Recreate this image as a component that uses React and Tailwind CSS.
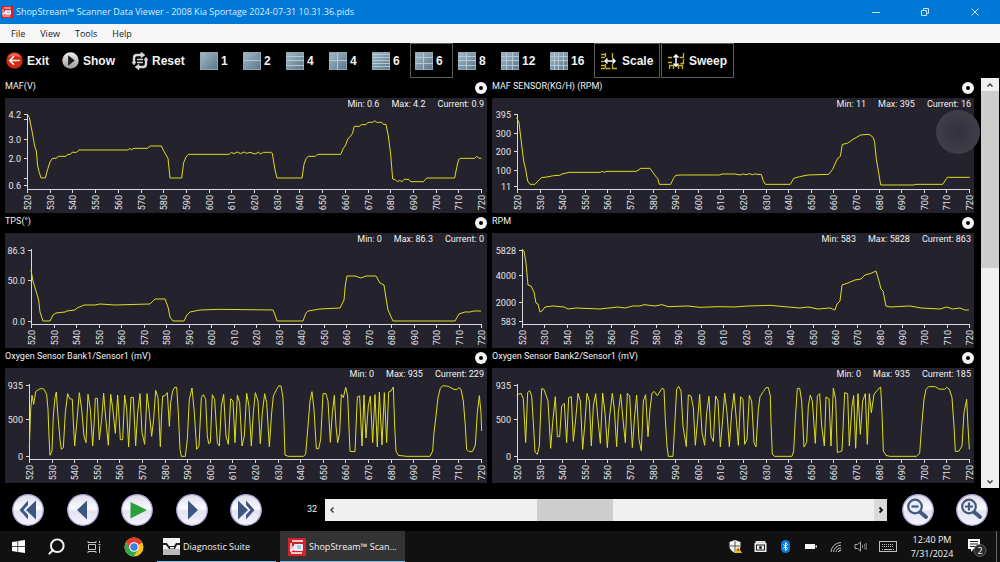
import { useState } from 'react'
import { Search } from 'lucide-react'

// Traces are recorded on a grid three times finer than the plot
const charts = [
  {
    title: 'MAF(V)',
    min: '0.6',
    max: '4.2',
    current: '0.9',
    left: 22,
    right: 476,
    yTicks: [[16, '4.2'], [21, ''], [41, '3.0'], [60, '2.0'], [80, ''], [87, '0.6']],
    origin: '-15 -66',
    points: '82,115 88,125 96,165 104,210 109,225 113,270 118,290 123,306 136,306 143,280 150,258 157,247 168,247 175,241 198,241 202,236 210,235 217,229 230,229 237,222 385,222 389,217 394,221 402,217 442,217 451,210 484,210 492,226 504,247 510,306 545,306 551,260 558,243 565,235 688,235 694,229 702,233 712,228 722,233 732,228 740,232 750,229 765,234 775,229 782,234 790,229 812,229 817,232 823,270 827,290 831,306 906,306 912,265 918,248 925,241 946,241 953,235 1022,235 1030,217 1037,207 1043,190 1050,182 1057,173 1063,151 1078,151 1084,146 1098,146 1104,139 1118,139 1124,134 1130,139 1145,139 1150,145 1158,145 1165,180 1172,235 1178,309 1186,311 1192,317 1199,313 1206,317 1213,310 1226,310 1232,317 1270,317 1280,306 1364,306 1370,275 1376,250 1381,247 1424,247 1430,241 1436,246 1444,247'
  },
  {
    title: 'MAF SENSOR(KG/H) (RPM)',
    min: '11',
    max: '395',
    current: '16',
    left: 25,
    right: 477,
    yTicks: [[16, '395'], [35, '300'], [53, '200'], [72, '100'], [88, '11']],
    origin: '-12 -66',
    points: '86,125 93,140 96,165 102,215 107,255 113,280 119,315 126,325 141,325 150,315 160,305 177,303 197,299 215,298 225,293 245,289 337,289 343,286 348,289 357,286 445,286 459,277 486,277 495,290 504,302 509,307 514,325 548,325 556,308 563,298 577,297 695,297 702,294 740,294 756,297 766,294 774,296 785,293 793,296 800,294 820,296 826,315 832,325 907,325 917,307 935,302 960,297 1022,295 1034,280 1045,255 1051,245 1057,241 1063,205 1078,202 1095,190 1118,177 1140,175 1148,178 1156,185 1160,200 1165,250 1172,290 1178,327 1276,327 1284,325 1364,325 1372,313 1378,304 1445,304'
  },
  {
    title: 'TPS(°)',
    min: '0',
    max: '86.3',
    current: '0',
    left: 26,
    right: 476,
    yTicks: [[17, '86.3'], [47, '50.0'], [88, '0.0']],
    origin: '-15 -66',
    points: '93,177 99,210 108,240 116,267 120,303 129,330 150,330 159,312 168,306 195,303 201,300 225,297 231,291 246,285 252,282 285,282 300,279 345,282 450,279 456,273 465,264 495,264 504,288 510,318 519,330 552,330 561,312 570,303 600,297 660,295 819,297 825,312 831,330 909,330 918,306 924,300 960,294 1020,291 1032,267 1036,222 1041,195 1065,195 1083,201 1098,195 1128,195 1140,216 1152,222 1158,261 1164,297 1179,330 1365,330 1377,309 1395,303 1410,303 1422,300 1443,300'
  },
  {
    title: 'RPM',
    min: '583',
    max: '5828',
    current: '863',
    left: 30,
    right: 477,
    yTicks: [[17, '5828'], [42, '4000'], [69, '2000'], [88, '583']],
    origin: '-12 -66',
    points: '102,117 108,120 114,156 120,222 129,225 138,243 144,276 150,279 156,303 162,300 171,288 195,285 228,288 240,294 264,291 336,294 390,288 411,291 435,285 456,285 468,281 501,285 522,281 540,287 600,285 636,289 690,287 740,288 780,285 846,283 900,288 936,291 960,288 990,294 1026,291 1041,297 1047,279 1056,270 1062,222 1080,216 1101,207 1119,204 1131,192 1149,187 1164,180 1173,210 1179,234 1185,240 1194,285 1206,288 1266,285 1299,291 1356,294 1376,288 1394,294 1416,291 1430,297 1443,297'
  },
  {
    title: 'Oxygen Sensor Bank1/Sensor1 (mV)',
    min: '0',
    max: '935',
    current: '229',
    left: 24,
    right: 476,
    yTicks: [[17, '935'], [51, '500'], [88, '0']],
    origin: '-15 -66',
    points: '88,305 92,190 96,148 101,175 107,137 115,131 125,127 132,130 140,145 144,190 147,270 150,328 156,315 160,210 165,155 169,138 173,200 180,280 184,310 190,305 196,200 203,143 209,158 217,160 220,230 224,300 230,235 238,140 245,190 252,270 258,290 264,145 271,190 278,300 283,220 286,157 292,157 298,282 305,220 311,142 317,215 325,298 332,145 338,185 346,262 353,147 357,210 361,281 368,281 374,147 380,190 386,303 393,154 400,154 407,299 413,200 420,143 426,260 434,295 441,143 447,190 455,271 461,220 467,133 474,155 481,302 485,200 488,150 494,150 502,140 508,241 512,170 518,135 524,124 530,124 535,200 540,310 544,331 556,331 562,280 568,160 576,126 583,200 590,310 597,300 604,155 610,146 617,160 622,270 626,293 631,290 637,146 644,160 652,290 658,300 664,180 671,145 678,270 685,295 692,158 699,165 705,290 712,147 719,170 726,300 733,270 740,142 747,180 754,300 760,200 766,140 774,165 781,293 787,200 794,143 800,170 808,302 815,200 820,150 830,130 837,119 843,120 849,155 852,230 855,327 865,331 910,331 917,325 924,240 930,165 936,137 942,190 949,308 956,308 962,280 969,143 978,143 984,165 991,289 997,200 1003,148 1008,240 1013,290 1019,260 1024,145 1030,155 1037,124 1043,150 1050,316 1065,317 1072,153 1079,150 1086,300 1092,147 1098,276 1105,180 1111,150 1118,290 1125,146 1132,303 1138,138 1146,297 1153,140 1160,290 1166,138 1173,135 1180,123 1184,240 1188,315 1195,328 1220,331 1290,331 1298,315 1302,260 1308,210 1314,155 1321,127 1328,119 1345,121 1362,130 1371,131 1376,125 1383,130 1390,165 1396,240 1400,310 1407,317 1418,316 1426,297 1432,200 1438,149 1443,200 1445,255'
  },
  {
    title: 'Oxygen Sensor Bank2/Sensor1 (mV)',
    min: '0',
    max: '935',
    current: '185',
    left: 25,
    right: 477,
    yTicks: [[17, '935'], [51, '500'], [88, '0']],
    origin: '-12 -66',
    points: '86,147 99,142 106,158 113,290 119,140 125,134 131,150 136,230 141,318 148,325 154,300 158,200 161,128 168,130 180,165 188,307 194,230 202,152 208,272 215,272 221,180 229,172 236,290 242,155 250,152 256,286 263,220 270,142 277,165 284,310 290,240 297,142 304,165 310,300 316,180 323,143 330,220 337,292 344,141 351,200 358,305 365,210 373,142 379,190 386,302 391,200 398,145 405,220 412,290 418,142 425,150 433,305 440,210 446,147 453,280 460,315 466,165 473,146 480,272 486,190 492,142 498,136 508,149 515,138 522,127 528,130 532,220 537,300 541,331 555,331 560,240 566,130 572,121 579,135 585,240 595,302 601,147 609,150 616,185 622,298 629,220 635,145 642,260 650,298 656,200 663,151 669,270 676,287 683,150 690,165 697,303 704,220 710,141 717,200 724,302 731,200 738,142 745,220 751,298 758,152 765,160 770,295 777,280 784,148 791,165 798,290 804,303 811,190 816,152 826,137 834,125 841,125 847,150 849,230 853,325 860,331 912,331 917,315 922,220 928,127 935,127 941,165 948,303 956,290 961,180 967,147 973,165 982,292 988,150 995,143 1001,240 1009,300 1014,153 1023,158 1029,300 1036,126 1043,160 1048,320 1054,317 1062,315 1070,140 1079,143 1084,300 1092,180 1097,149 1103,307 1110,143 1117,265 1124,165 1132,143 1138,295 1144,143 1150,200 1158,145 1170,130 1178,123 1182,200 1186,315 1194,328 1205,331 1285,331 1295,322 1301,240 1308,160 1314,130 1322,122 1342,122 1352,129 1370,130 1376,124 1384,130 1392,155 1398,240 1402,316 1412,316 1422,300 1428,200 1436,160 1440,240 1444,310'
  }
]

const layouts = [
  { id: '1', label: '1', cols: 1, rows: 1 },
  { id: '2', label: '2', cols: 1, rows: 2 },
  { id: '4r', label: '4', cols: 1, rows: 4 },
  { id: '4', label: '4', cols: 2, rows: 2 },
  { id: '6r', label: '6', cols: 1, rows: 6 },
  { id: '6', label: '6', cols: 2, rows: 3 },
  { id: '8', label: '8', cols: 2, rows: 4 },
  { id: '12', label: '12', cols: 3, rows: 4 },
  { id: '16', label: '16', cols: 4, rows: 4 }
]

const range = (n) => Array.from({ length: n }, (_, i) => i)

function AppIcon({ className }) {
  return (
    <svg viewBox="0 0 18 18" className={className}>
      <rect width="18" height="18" fill="#d3202c" />
      <path d="M4 3h11M3 5v9M3 15h11" stroke="#fff" strokeWidth="1.4" fill="none" />
      <rect x="6" y="6" width="9" height="7" rx="1" fill="#e8f1f8" />
      <path d="M2 12h3v-3h2" stroke="#fff" strokeWidth="1.5" fill="none" />
      <rect x="9" y="7" width="4" height="4" fill="#a9cbe6" />
    </svg>
  )
}

function Chart({ chart }) {
  const { left, right } = chart
  return (
    <section>
      <div className="flex h-5 items-start justify-between">
        <h2 className="text-[9px] leading-4 whitespace-nowrap">{chart.title}</h2>
        <button aria-label={`Options for ${chart.title}`} className="mt-1 flex size-3 items-center justify-center rounded-full bg-[#f4f4f4]">
          <span className="size-1 rounded-full bg-black" />
        </button>
      </div>
      <div className="bg-[#24222c]">
        <div className="flex h-3 justify-end gap-3 pr-[3px] text-[9px] leading-3">
          <span>Min: {chart.min}</span>
          <span>Max: {chart.max}</span>
          <span>Current: {chart.current}</span>
        </div>
        <svg viewBox="0 12 482 103" className="block h-auto w-full" role="img" aria-label={`${chart.title} graph`}>
          <g stroke="#d8d8de" strokeWidth="1" fill="none" shapeRendering="crispEdges">
            <path d={`M${left + 0.5} 16V91.5H${right + 1}`} />
            {chart.yTicks.map(([y]) => (
              <path key={y} d={`M${left - 3} ${y + 0.5}h3`} />
            ))}
            {range(21).map((i) => (
              <path key={i} d={`M${Math.round(left + ((right - left) * i) / 20) + 0.5} 91v4`} />
            ))}
          </g>
          <g fill="#e4e4e8" fontSize="9">
            {chart.yTicks.map(([y, label]) => (
              <text key={y} x={left - 6} y={y + 4} textAnchor="end">{label}</text>
            ))}
            {range(21).map((i) => (
              <text
                key={i}
                transform={`translate(${Math.round(left + ((right - left) * i) / 20) + 4} 97) rotate(-90)`}
                textAnchor="end"
              >
                {520 + i * 10}
              </text>
            ))}
          </g>
          <g transform="scale(0.33333)">
            <polyline
              transform={`translate(${chart.origin.replace(' ', ',')})`}
              points={chart.points}
              fill="none"
              stroke="#dede1c"
              strokeWidth="3"
              strokeLinejoin="round"
            />
          </g>
        </svg>
      </div>
    </section>
  )
}

function LayoutIcon({ cols, rows }) {
  return (
    <svg viewBox="0 0 18 18" className="size-[18px] shrink-0">
      <defs>
        <linearGradient id="pane" x1="0" y1="0" x2="1" y2="1">
          <stop offset="0" stopColor="#a3bac8" />
          <stop offset="1" stopColor="#5c7688" />
        </linearGradient>
      </defs>
      <rect x="0.5" y="0.5" width="17" height="17" fill="url(#pane)" stroke="#8fa6b4" />
      <g stroke="#b4c8d3" strokeWidth="1">
        {range(cols - 1).map((i) => (
          <path key={i} d={`M${Math.round((18 * (i + 1)) / cols) - 0.5} 0v18`} />
        ))}
        {range(rows - 1).map((i) => (
          <path key={i} d={`M0 ${Math.round((18 * (i + 1)) / rows) - 0.5}h18`} />
        ))}
      </g>
    </svg>
  )
}

function RoundButton({ label, children }) {
  return (
    <button aria-label={label} className="size-8 shrink-0">
      <svg viewBox="0 0 32 32" className="size-8">
        <defs>
          <linearGradient id="knob" x1="0" y1="0" x2="0" y2="1">
            <stop offset="0" stopColor="#dcdcea" />
            <stop offset="0.45" stopColor="#fafaff" />
            <stop offset="0.55" stopColor="#e4e3f2" />
            <stop offset="1" stopColor="#f4f3ff" />
          </linearGradient>
        </defs>
        <circle cx="16" cy="16" r="15.3" fill="url(#knob)" stroke="#a9a2d4" strokeWidth="1.2" />
        {children}
      </svg>
    </button>
  )
}

function TitleBar() {
  return (
    <header className="flex h-6 items-center bg-[#0078d7] pl-px">
      <AppIcon className="size-3" />
      <h1 className="ml-[3px] font-['Open_Sans',sans-serif] text-[9px] leading-4 whitespace-nowrap text-[#dcecfa]">
        ShopStream™ Scanner Data Viewer - 2008 Kia Sportage 2024-07-31 10.31.36.pids
      </h1>
      <div className="ml-auto flex h-full">
        <button aria-label="Minimize" className="flex w-[49px] items-center justify-center">
          <svg viewBox="0 0 8 8" className="size-2" stroke="#cfe4f7"><path d="M0 4.5h8" /></svg>
        </button>
        <button aria-label="Restore" className="flex w-[49px] items-center justify-center">
          <svg viewBox="0 0 8 8" className="size-2" stroke="#cfe4f7" fill="none"><path d="M.5 2.5h5v5h-5zM2.5 2.5V.5h5v5h-2" /></svg>
        </button>
        <button aria-label="Close" className="flex w-[51px] items-center justify-center">
          <svg viewBox="0 0 8 8" className="size-2" stroke="#cfe4f7"><path d="M.5.5l7 7M7.5.5l-7 7" /></svg>
        </button>
      </div>
    </header>
  )
}

function Toolbar() {
  const [layout, setLayout] = useState('6')

  return (
    <div className="flex h-[35px] bg-black font-['Liberation_Sans',sans-serif] text-[12px] font-bold">
      <button className="flex w-14 items-center gap-1 pl-1.5">
        <svg viewBox="0 0 18 18" className="size-[17px] shrink-0">
          <circle cx="9" cy="9" r="8.7" fill="#cf2a12" />
          <path d="M2 6a7.5 7.5 0 0 1 14 0C12 4 6 4 2 6z" fill="#e8694c" />
          <path d="M14.5 9H4M8.5 4.5L4 9l4.5 4.5" fill="none" stroke="#fff" strokeWidth="1.8" />
        </svg>
        Exit
      </button>
      <button className="flex w-[69px] items-center gap-1 pl-1.5">
        <svg viewBox="0 0 18 18" className="size-[17px] shrink-0">
          <defs>
            <linearGradient id="show" x1="0" y1="0" x2="0" y2="1">
              <stop offset="0" stopColor="#efefef" />
              <stop offset="1" stopColor="#9c9c9c" />
            </linearGradient>
          </defs>
          <circle cx="9" cy="9" r="8.7" fill="url(#show)" />
          <path d="M6.5 3.5L13.5 9l-7 5.5z" fill="#1c1c1c" />
        </svg>
        Show
      </button>
      <button className="flex w-[70px] items-center gap-[3px] pl-1.5">
        <svg viewBox="0 0 18 18" className="size-[18px] shrink-0" fill="none" stroke="#d8d8d8">
          <path d="M3 11V6C3 4 4 3 6 3h5" strokeWidth="2.4" />
          <path d="M15 7v5c0 2-1 3-3 3H7" strokeWidth="2.4" />
          <path d="M10 0l4 3-4 3zM8 12l-4 3 4 3zM1 10h4l-2 3zM13 8h4l-2-3z" fill="#d8d8d8" strokeWidth=".5" />
          <path d="M6 7.5h6M6 10.5h6" strokeWidth="1.5" />
        </svg>
        Reset
      </button>
      {layouts.map(({ id, label, cols, rows }) => (
        <button
          key={id}
          aria-pressed={layout === id}
          onClick={() => setLayout(id)}
          className={`flex items-center gap-[3px] border pl-1 ${label.length > 1 ? 'w-[49px]' : 'w-[43px]'} ${
            layout === id ? 'border-[#5a5a5a]' : 'border-transparent'
          }`}
        >
          <LayoutIcon cols={cols} rows={rows} />
          {label}
        </button>
      ))}
      <button className="flex w-[66px] items-center gap-1 border border-[#5a5a5a] pl-[5px]">
        <svg viewBox="0 0 18 18" className="size-[18px] shrink-0" fill="none">
          <path d="M1 2.5h4M1 5.5h4M1 9.5h3M1 13.5h4M1 16.5h4M5.5 1v4M12.5 1v5M5.5 16.5h5M12 16.5h5M5.5 12v4M12.5 12v4" stroke="#c8b31e" strokeWidth="1.3" />
          <path d="M5 9h10M7.5 6.5L5 9l2.5 2.5M12.5 6.5L15 9l-2.5 2.5" stroke="#fff" strokeWidth="1.5" />
        </svg>
        Scale
      </button>
      <button className="ml-px flex w-[73px] items-center gap-1 border border-[#5a5a5a] pl-[5px]">
        <svg viewBox="0 0 18 18" className="size-[18px] shrink-0" fill="none">
          <path d="M1 5.5h4M16.5 1v4.5h-4M1 10.5h4M16.5 7v4.5h-3M2.5 17v-3.5h13V17M6.5 14v3M11.5 14v3" stroke="#c8b31e" strokeWidth="1.3" />
          <path d="M9 3v11M6.5 5.5L9 3l2.5 2.5M6.5 11.5L9 14l2.5-2.5" stroke="#fff" strokeWidth="1.5" />
        </svg>
        Sweep
      </button>
    </div>
  )
}

function Transport() {
  return (
    <div className="flex h-[43px] items-center bg-black px-3">
      <div className="flex w-[250px] shrink-0 justify-between">
        <RoundButton label="First frame">
          <path d="M24 6.5v19L14 16z" fill="#3d5580" />
          <path d="M16 6.5L7.5 16 16 25.5V21l-4.5-5 4.5-5z" fill="#3d5580" />
        </RoundButton>
        <RoundButton label="Previous frame">
          <path d="M20 6.5v19L10 16z" fill="#3d5580" />
        </RoundButton>
        <RoundButton label="Play">
          <path d="M9.5 8v16.5L26 16z" fill="#2ba03c" />
        </RoundButton>
        <RoundButton label="Next frame">
          <path d="M12 6.5v19L22 16z" fill="#3d5580" />
        </RoundButton>
        <RoundButton label="Last frame">
          <path d="M8 6.5v19L18 16z" fill="#3d5580" />
          <path d="M16 6.5l8.5 9.5-8.5 9.500V21l4.500-5-4.500-5z" fill="#3d5580" />
        </RoundButton>
      </div>
      <span className="ml-[45px] w-[18px] text-[9px]">32</span>
      <div className="flex h-[22px] grow items-stretch bg-[#f0f0f0]">
        <button aria-label="Scroll left" className="flex w-[13px] items-center justify-center">
          <svg viewBox="0 0 6 8" className="h-2 w-1.5" fill="none" stroke="#444" strokeWidth="1.5"><path d="M4.5 1.5L2 4l2.5 2.5" /></svg>
        </button>
        <div className="grow-[199]" />
        <div className="grow-[76] bg-[#cdcdcd]" />
        <div className="grow-[261]" />
        <button aria-label="Scroll right" className="flex w-[13px] items-center justify-center bg-[#dadada]">
          <svg viewBox="0 0 6 8" className="h-2 w-1.5" fill="none" stroke="#111" strokeWidth="1.8"><path d="M1.5 1.5L4 4 1.5 6.5" /></svg>
        </button>
      </div>
      <div className="ml-[15px] flex gap-[22px]">
        <RoundButton label="Zoom out">
          <path d="M17.5 17.5l6.500 5.500" stroke="#46597c" strokeWidth="4" strokeLinecap="round" />
          <circle cx="13" cy="12.5" r="6.8" fill="#e9edf6" stroke="#46597c" strokeWidth="2.2" />
          <path d="M9.5 12.5h7" stroke="#46597c" strokeWidth="2.2" />
        </RoundButton>
        <RoundButton label="Zoom in">
          <path d="M17.5 17.5l6.500 5.500" stroke="#46597c" strokeWidth="4" strokeLinecap="round" />
          <circle cx="13" cy="12.5" r="6.8" fill="#e9edf6" stroke="#46597c" strokeWidth="2.2" />
          <path d="M9 12.5h8M13 8.5v8" stroke="#46597c" strokeWidth="2.2" />
        </RoundButton>
      </div>
    </div>
  )
}

function Taskbar() {
  return (
    <footer className="flex h-[31px] items-stretch bg-[#111112] font-['Open_Sans',sans-serif] text-[9px]">
      <button aria-label="Start" className="flex w-[37px] items-center justify-center">
        <svg viewBox="0 0 13 13" className="size-[13px]" fill="#fff">
          <path d="M0 2l5.5-.8v5H0zM6.2 1L13 0v6.2H6.2zM0 6.9h5.5v5L0 11.1zM6.2 6.9H13V13l-6.8-1z" />
        </svg>
      </button>
      <button aria-label="Search" className="flex w-[38px] items-center justify-center">
        <Search className="size-[19px] -scale-x-100" strokeWidth={2.5} />
      </button>
      <button aria-label="Task view" className="flex w-[37px] items-center justify-center">
        <svg viewBox="0 0 14 14" className="size-[14px]" fill="none" stroke="#c8c8c8">
          <path d="M1 1v1.5h8V1M1.5 4.5h7v5h-7zM1 13v-1.5h8V13M12.5 1v2M12.5 6v7M11.5 4.5h2" />
        </svg>
      </button>
      <button aria-label="Chrome" className="flex w-[43px] items-center justify-center">
        <svg viewBox="0 0 20 20" className="size-5">
          <circle cx="10" cy="10" r="9.5" fill="#fbc116" />
          <path d="M10 10L1.8 5.2A9.5 9.5 0 0 1 18.2 5.2z" fill="#e33b2e" />
          <path d="M10 5.2h8.2L10 10zM1.8 5.2L5.8 12.4 10 10z" fill="#e33b2e" />
          <path d="M1.8 5.2A9.5 9.5 0 0 0 9.5 19.5L14.2 12.4 10 10 5.9 12.4z" fill="#2da94f" />
          <circle cx="10" cy="10" r="4.8" fill="#fff" />
          <circle cx="10" cy="10" r="3.7" fill="#3b7ded" />
        </svg>
      </button>
      <button className="ml-0.5 flex w-[119px] items-center gap-[3px] border-b border-[#76b9ed] pt-px pl-1.5">
        <svg viewBox="0 0 17 17" className="size-[17px] shrink-0">
          <rect width="17" height="17" fill="#f1f1f1" />
          <rect y="11" width="17" height="6" fill="#b9b9b9" />
          <path d="M0 5h4l2 3h5l2-3h4v2h-3l-2 4H6L3 7H0z" fill="#222" />
          <path d="M7 9h4v1.5H7z" fill="#fff" />
        </svg>
        Diagnostic Suite
      </button>
      <button className="ml-1 flex w-[125px] items-center gap-[3px] border-b border-[#76b9ed] bg-[#333334] pt-px pl-2">
        <AppIcon className="size-[18px] shrink-0" />
        ShopStream™ Scan...
      </button>
      <div className="ml-auto flex items-center">
        <button aria-label="Security" className="flex w-[25px] justify-center">
          <svg viewBox="0 0 13 13" className="size-[13px]">
            <path d="M6 0l5.5 2v4.5C11.5 9.5 9 11.5 6 13 3 11.5.5 9.5.5 6.5V2z" fill="#f2f2f2" />
            <path d="M6 1v11M1 6h10" stroke="#333" strokeWidth=".8" />
            <path d="M9 6.5l4 6.5H5z" fill="#f5b51b" />
            <path d="M9 9v2" stroke="#222" />
          </svg>
        </button>
        <button aria-label="Device" className="flex w-[25px] justify-center">
          <svg viewBox="0 0 13 13" className="size-[13px]">
            <rect x="1.5" y="1" width="10" height="2" fill="#ddd" />
            <rect x=".5" y="3" width="12" height="9" fill="#ececec" />
            <rect x="2.5" y="5" width="8" height="5" fill="none" stroke="#222" />
            <circle cx="6.5" cy="7.5" r="1.5" fill="#222" />
          </svg>
        </button>
        <button aria-label="Bluetooth" className="flex w-[25px] justify-center">
          <svg viewBox="0 0 13 13" className="size-[13px]">
            <rect x="2" y="0" width="9" height="13" rx="4.5" fill="#0a7be0" />
            <path d="M4.2 4.5l4.4 4L6.5 10.5v-8L8.6 4.5l-4.4 4" fill="none" stroke="#fff" strokeWidth=".9" />
          </svg>
        </button>
        <button aria-label="Battery" className="flex w-[25px] justify-center">
          <svg viewBox="0 0 13 13" className="size-[13px]"><path d="M1 4h10v5H1zM11.5 5.5H13v2h-1.5z" fill="#f4f4f4" /></svg>
        </button>
        <button aria-label="Network" className="flex w-[25px] justify-center">
          <svg viewBox="0 0 13 13" className="size-[13px]" fill="none" stroke="#b8b8b8">
            <path d="M2 12A10 10 0 0 1 12 2.5M4.5 12A7.5 7.5 0 0 1 12 5.2M7 12A5 5 0 0 1 12 8" />
            <path d="M9.5 12a2.5 2.5 0 0 1 2.5-2" stroke="#fff" />
          </svg>
        </button>
        <button aria-label="Volume" className="flex w-[25px] justify-center">
          <svg viewBox="0 0 13 13" className="size-[13px]" fill="none" stroke="#a8a8a8">
            <path d="M1 4.5h2.5L6.5 2v9L3.5 8.5H1z" />
            <path d="M8.5 5v3M10.2 4a4 4 0 0 1 0 5M11.8 3a6 6 0 0 1 0 7" strokeWidth=".8" />
          </svg>
        </button>
        <button aria-label="Keyboard" className="flex w-[30px] justify-center">
          <svg viewBox="0 0 18 12" className="h-3 w-[18px]" fill="none" stroke="#bdbdbd">
            <rect x=".5" y=".5" width="17" height="10" />
            <path d="M3 3.5h12M3 5.5h12" strokeDasharray="1 1" />
            <path d="M3 8.5h1M5 8.5h8M14 8.5h1" />
          </svg>
        </button>
        <button className="w-[58px] text-center leading-[14px]">
          12:40 PM<br />7/31/2024
        </button>
        <button aria-label="2 notifications" className="mr-[9px] ml-1.5 flex w-5 justify-center">
          <svg viewBox="0 0 20 20" className="size-5">
            <path d="M1 2h12v10H6.5L4 15v-3H1z" fill="#fff" />
            <path d="M3 4.5h8M3 7h8M3 9.5h6" stroke="#222" />
            <circle cx="13" cy="13.5" r="6" fill="#2a2a2a" stroke="#777" strokeWidth=".8" />
            <text x="13" y="17" fontSize="9" fill="#fff" textAnchor="middle">2</text>
          </svg>
        </button>
        <div className="mr-[3px] h-[31px] w-px bg-[#666]" />
      </div>
    </footer>
  )
}

function App() {
  return (
    <div className="flex min-h-screen flex-col bg-black font-['Roboto','Liberation_Sans',sans-serif] text-[#f2f2f2]">
      <TitleBar />
      <nav className="flex h-[19px] items-center gap-[15px] bg-[#f6f6f6] pl-[11px] font-['Open_Sans',sans-serif] text-[9px] text-[#1a1a1a]">
        <button>File</button>
        <button>View</button>
        <button>Tools</button>
        <button>Help</button>
      </nav>
      <Toolbar />
      <main className="relative flex grow pr-px pl-[5px]">
        <div className="grid grow grid-cols-2 gap-x-[5px] self-start pb-[5px]">
          {charts.map((chart) => (
            <Chart key={chart.title} chart={chart} />
          ))}
        </div>
        <div className="ml-[7px] flex w-[18px] flex-col bg-[#f0f0f0]">
          <button aria-label="Scroll up" className="flex h-[13px] items-center justify-center">
            <svg viewBox="0 0 8 6" className="h-1.5 w-2" fill="none" stroke="#444" strokeWidth="1.5"><path d="M1.5 4.5L4 2l2.5 2.5" /></svg>
          </button>
          <div className="grow-[177] bg-[#cdcdcd]" />
          <div className="grow-[206]" />
          <button aria-label="Scroll down" className="flex h-[13px] items-center justify-center">
            <svg viewBox="0 0 8 6" className="h-1.5 w-2" fill="none" stroke="#444" strokeWidth="1.5"><path d="M1.5 1.5L4 4l2.5-2.5" /></svg>
          </button>
        </div>
        {/* floating touch button */}
        <div className="absolute top-8 right-5 size-11 rounded-full bg-radial from-[#33323c] to-[#45444e]" />
      </main>
      <Transport />
      <Taskbar />
    </div>
  )
}

export default App
